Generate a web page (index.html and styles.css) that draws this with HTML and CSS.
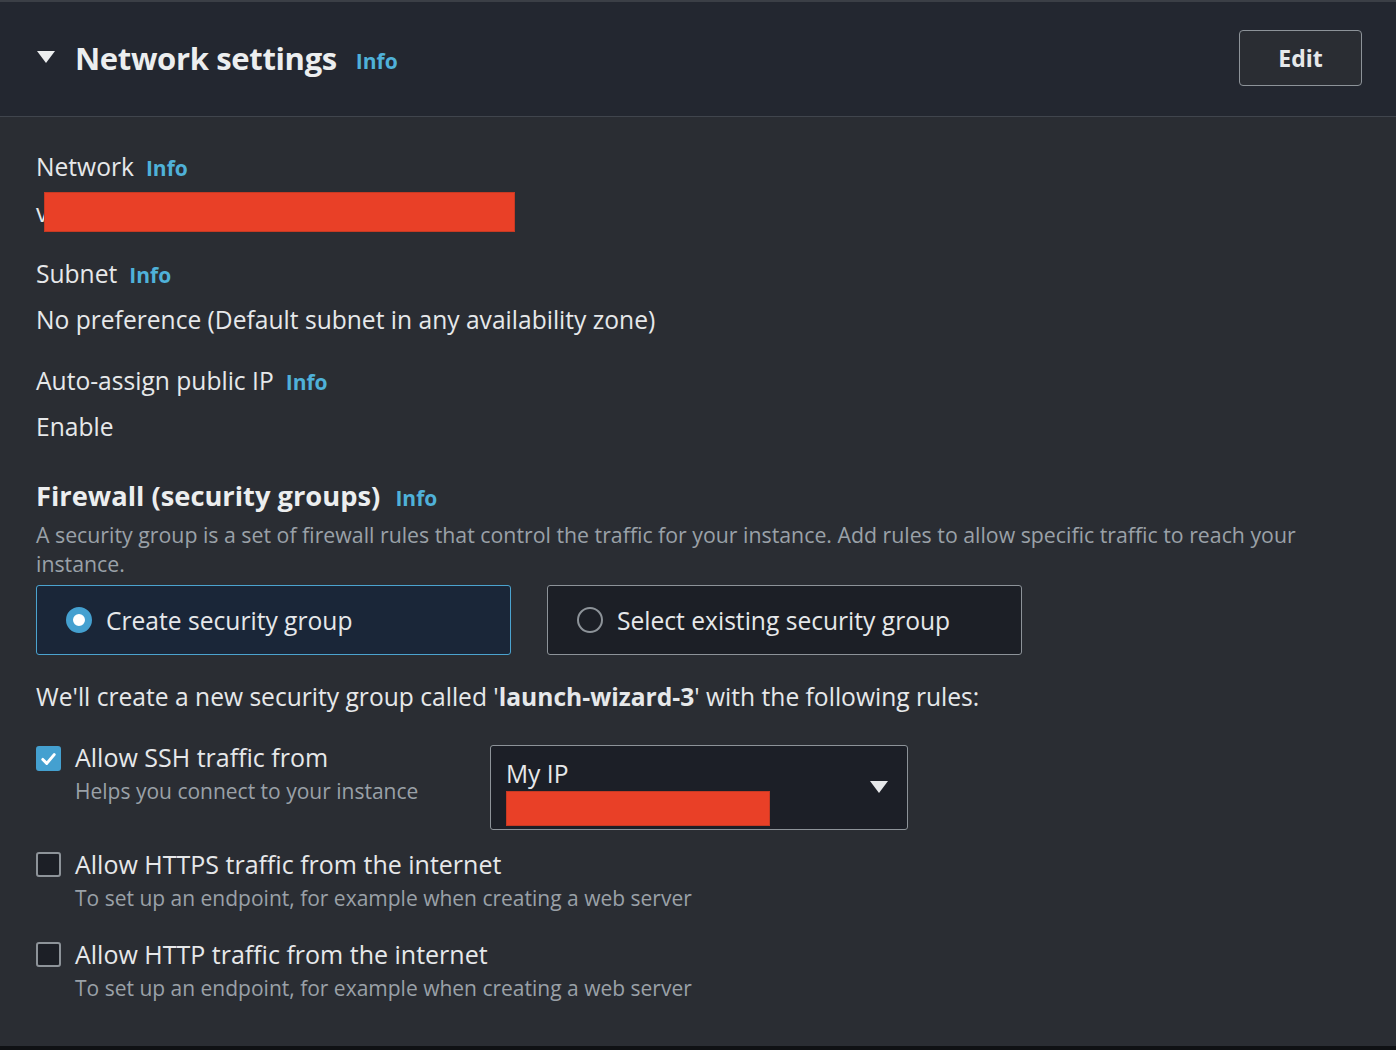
FILE: index.html
```html
<!DOCTYPE html>
<html>
<head>
<meta charset="utf-8">
<link rel="stylesheet" href="styles.css">
</head>
<body>
<div class="panel">
  <header class="head">
    <div class="head-title">
      <svg class="caret" width="18" height="13" viewBox="0 0 18 13"><path d="M0 0 H18 L9 12 Z" fill="#eceeef"/></svg>
      <h2>Network settings</h2>
      <a class="info info-lg">Info</a>
    </div>
    <button class="edit">Edit</button>
  </header>
  <div class="body">
    <div class="field field-net">
      <div class="label">Network <a class="info">Info</a></div>
      <div class="redact-row"><span>v</span><span class="redact redact-net"></span></div>
    </div>
    <div class="field">
      <div class="label">Subnet <a class="info">Info</a></div>
      <div class="value">No preference (Default subnet in any availability zone)</div>
    </div>
    <div class="field">
      <div class="label">Auto-assign public IP <a class="info">Info</a></div>
      <div class="value">Enable</div>
    </div>
    <div class="firewall">
      <h3>Firewall (security groups) <a class="info">Info</a></h3>
      <p class="desc">A security group is a set of firewall rules that control the traffic for your instance. Add rules to allow specific traffic to reach your instance.</p>
      <div class="tiles">
        <div class="tile selected"><span class="radio on"></span>Create security group</div>
        <div class="tile"><span class="radio"></span>Select existing security group</div>
      </div>
      <p class="note">We'll create a new security group called '<b>launch-wizard-3</b>' with the following rules:</p>
      <div class="rule rule-ssh">
        <div class="check-row">
          <span class="cbox checked"><svg width="24" height="24" viewBox="0 0 24 24"><path d="M5.5 12.5 L10 17 L18.5 7" fill="none" stroke="#fff" stroke-width="3.4" stroke-linecap="round" stroke-linejoin="round"/></svg></span>
          <div>
            <div class="rule-label ssh-label">Allow SSH traffic from</div>
            <div class="hint ssh-hint">Helps you connect to your instance</div>
          </div>
        </div>
        <div class="select">
          <div class="sel-body">
            <div class="sel-text">My IP</div>
            <div class="redact redact-ip"></div>
          </div>
          <svg class="sel-caret" width="18" height="13" viewBox="0 0 18 13"><path d="M0 0 H18 L9 12 Z" fill="#e6e8ea"/></svg>
        </div>
      </div>
      <div class="rule">
        <div class="check-row">
          <span class="cbox"></span>
          <div>
            <div class="rule-label">Allow HTTPS traffic from the internet</div>
            <div class="hint">To set up an endpoint, for example when creating a web server</div>
          </div>
        </div>
      </div>
      <div class="rule rule-last">
        <div class="check-row">
          <span class="cbox"></span>
          <div>
            <div class="rule-label">Allow HTTP traffic from the internet</div>
            <div class="hint">To set up an endpoint, for example when creating a web server</div>
          </div>
        </div>
      </div>
    </div>
  </div>
</div>
</body>
</html>
```
FILE: styles.css
```css
* { box-sizing: border-box; }
html, body { margin: 0; padding: 0; }
body {
  background: #2a2d33;
  font-family: "Open Sans", "Noto Sans", sans-serif;
  color: #e6e8ea;
  width: 1396px;
  height: 1050px;
  overflow: hidden;
}
.panel {
  height: 1050px;
  border-top: 2px solid #3b3f46;
  border-bottom: 4px solid #0f1114;
  background: #2a2d33;
  display: flex;
  flex-direction: column;
}
.head {
  height: 115px;
  background: #232730;
  border-bottom: 1px solid #40454d;
  display: flex;
  align-items: center;
  justify-content: space-between;
  padding: 0 34px 2px 37px;
}
.head-title { display: flex; align-items: center; margin-top: -1px; }
.caret { margin-right: 20px; }
h2 {
  margin: 0;
  font-size: 31px;
  font-weight: 700;
  color: #eceeef;
  letter-spacing: -0.35px;
}
.info {
  color: #4fb1d9;
  font-weight: 700;
  font-size: 21px;
  margin-left: 8px;
}
.info-lg { font-size: 21px; margin-left: 19px; margin-top: 6px; }
.edit {
  width: 123px;
  height: 56px;
  background: #2a2d33;
  border: 1px solid #8d9399;
  border-radius: 4px;
  color: #e6e8ea;
  font-family: inherit;
  font-size: 23px;
  font-weight: 700;
}
.body {
  padding: 34px 36px 0 36px;
}
.field { margin-bottom: 29px; }
.field-net { margin-bottom: 26px; }
.label {
  font-size: 24.6px;
  line-height: 32px;
  color: #e6e8ea;
  display: flex;
  align-items: baseline;
}
.label .info { margin-left: 12px; }
.value {
  font-size: 24.6px;
  line-height: 32px;
  margin-top: 13px;
  color: #e6e8ea;
}
.redact-row {
  display: flex;
  align-items: center;
  height: 40px;
  margin-top: 8px;
  font-size: 24.6px;
}
.redact { background: #e94027; border: 1px solid #c73a23; }
.redact-net { width: 471px; height: 40px; margin-left: -4px; }
.firewall { margin-top: 35px; }
h3 {
  margin: 0;
  font-size: 27.3px;
  font-weight: 700;
  line-height: 36px;
  color: #eceeef;
}
h3 .info { margin-left: 8px; }
.desc {
  margin: 4px 0 0 0;
  font-size: 21.3px;
  line-height: 29px;
  color: #9aa1a8;
}
.tiles {
  display: flex;
  gap: 36px;
  margin-top: 7px;
}
.tile {
  width: 475px;
  height: 70px;
  border: 1px solid #8d9399;
  background: #1c1f26;
  border-radius: 3px;
  display: flex;
  align-items: center;
  padding-left: 29px;
  font-size: 24.6px;
  color: #e6e8ea;
}
.tile.selected {
  background: #1a2638;
  border-color: #4ba3cf;
}
.radio {
  width: 26px;
  height: 26px;
  border-radius: 50%;
  border: 2px solid #8d9399;
  margin-right: 14px;
  flex: none;
}
.radio.on {
  border: 7px solid #44a0d0;
  background: #fff;
}
.note {
  margin: 26px 0 0 0;
  font-size: 24.6px;
  line-height: 32px;
  color: #e6e8ea;
}
.note b { font-weight: 700; }
.rule { margin-top: 20px; }
.rule-last { margin-top: 28px; }
.rule-ssh {
  display: flex;
  align-items: flex-start;
  margin-top: 32px;
}
.rule-ssh .check-row { width: 454px; }
.check-row { display: flex; align-items: flex-start; }
.cbox {
  width: 25px;
  height: 25px;
  border: 2px solid #8d9399;
  border-radius: 3px;
  background: #1c1f26;
  margin-right: 14px;
  margin-top: 2px;
  flex: none;
  display: flex;
  align-items: center;
  justify-content: center;
}
.cbox.checked { background: #44a0d0; border-color: #44a0d0; margin-top: 1px; }
.rule-label {
  font-size: 25px;
  line-height: 28px;
  color: #e6e8ea;
}
.ssh-label { line-height: 24px; }
.hint {
  font-size: 21px;
  line-height: 28px;
  margin-top: 6px;
  color: #9aa1a8;
}
.ssh-hint { margin-top: 8px; }
.select {
  width: 418px;
  height: 85px;
  border: 1px solid #8d9399;
  border-radius: 3px;
  background: #1c1f27;
  display: flex;
  align-items: flex-start;
  justify-content: space-between;
  padding: 12px 19px 0 15px;
}
.sel-text { font-size: 24.6px; line-height: 32px; }
.redact-ip { width: 264px; height: 35px; margin-top: 1px; }
.sel-caret { align-self: center; margin-top: -12px; }
```
